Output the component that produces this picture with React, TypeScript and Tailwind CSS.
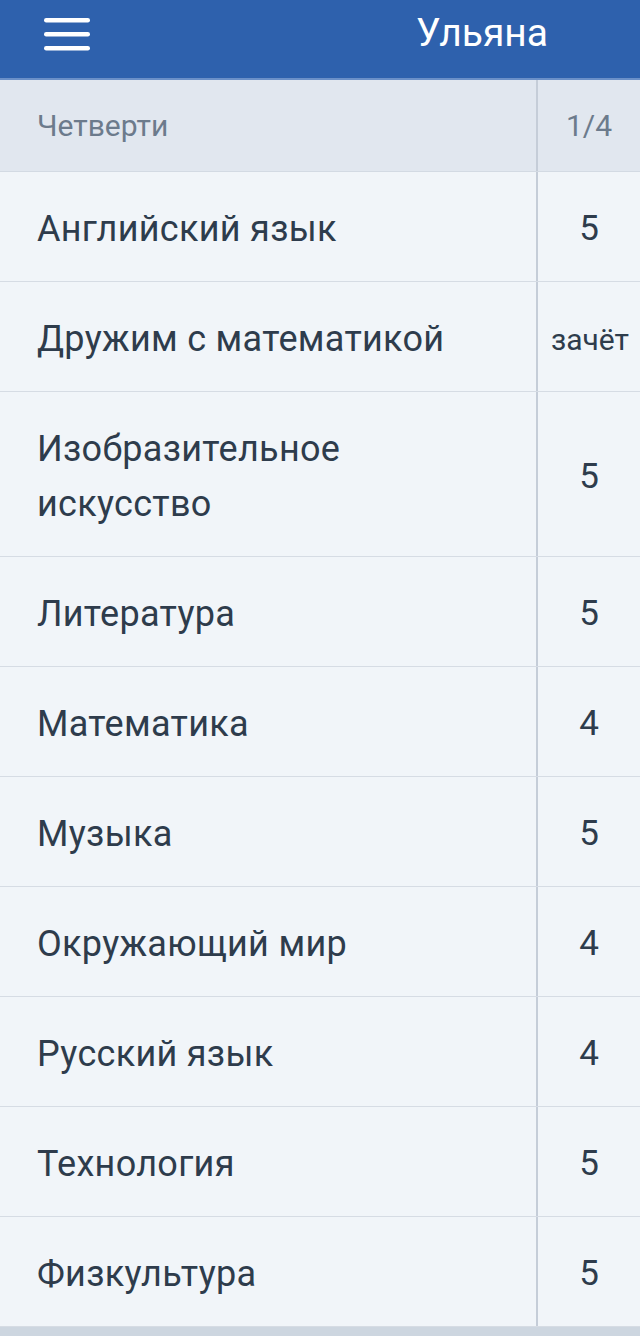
import React from "react";

const rows: { name: string; grade: string; small?: boolean }[] = [
  { name: "Английский язык", grade: "5" },
  { name: "Дружим с математикой", grade: "зачёт", small: true },
  { name: "Изобразительное искусство", grade: "5" },
  { name: "Литература", grade: "5" },
  { name: "Математика", grade: "4" },
  { name: "Музыка", grade: "5" },
  { name: "Окружающий мир", grade: "4" },
  { name: "Русский язык", grade: "4" },
  { name: "Технология", grade: "5" },
  { name: "Физкультура", grade: "5" },
];

export default function App() {
  return (
    <div className="w-[640px] h-[1336px] overflow-hidden bg-[#cdd6e0] font-['Roboto',sans-serif]">
      <header className="h-[80px] bg-[#2e61ad] flex items-center justify-between pl-[44px] pr-[92px] border-b-2 border-[#6b90c8]">
        <svg width="46" height="34" viewBox="0 0 46 34" className="mb-[8px]">
          <rect x="0" y="0" width="46" height="4.5" rx="2.2" fill="#fff" />
          <rect x="0" y="14" width="46" height="4.5" rx="2.2" fill="#fff" />
          <rect x="0" y="28" width="46" height="4.5" rx="2.2" fill="#fff" />
        </svg>
        <span className="text-white text-[39px] leading-none mb-[12px]">Ульяна</span>
      </header>
      <div className="flex bg-[#e1e7ef] h-[92px] border-b border-[#d3dae3]">
        <div className="w-[536px] flex items-center pl-[37px] text-[30px] text-[#6c7b8c]">Четверти</div>
        <div className="w-[2px] bg-[#c5cdd8]" />
        <div className="flex-1 flex items-center justify-center text-[30px] text-[#6c7b8c]">1/4</div>
      </div>
      {rows.map((r, i) => (
        <div key={i} className="flex bg-[#f1f5f9] border-b border-[#d6dce4]">
          <div className="w-[536px] pl-[37px] pr-[60px] pt-[30px] pb-[24px] text-[36px] tracking-[0.3px] leading-[55px] text-[#2e3c4c]">
            {r.name}
          </div>
          <div className="w-[2px] bg-[#c5cdd8]" />
          <div
            className={`flex-1 flex items-center justify-center pt-[6px] text-[#2e3c4c] ${
              r.small ? "text-[30px] pl-[2px]" : "text-[35px]"
            }`}
          >
            {r.grade}
          </div>
        </div>
      ))}
    </div>
  );
}
